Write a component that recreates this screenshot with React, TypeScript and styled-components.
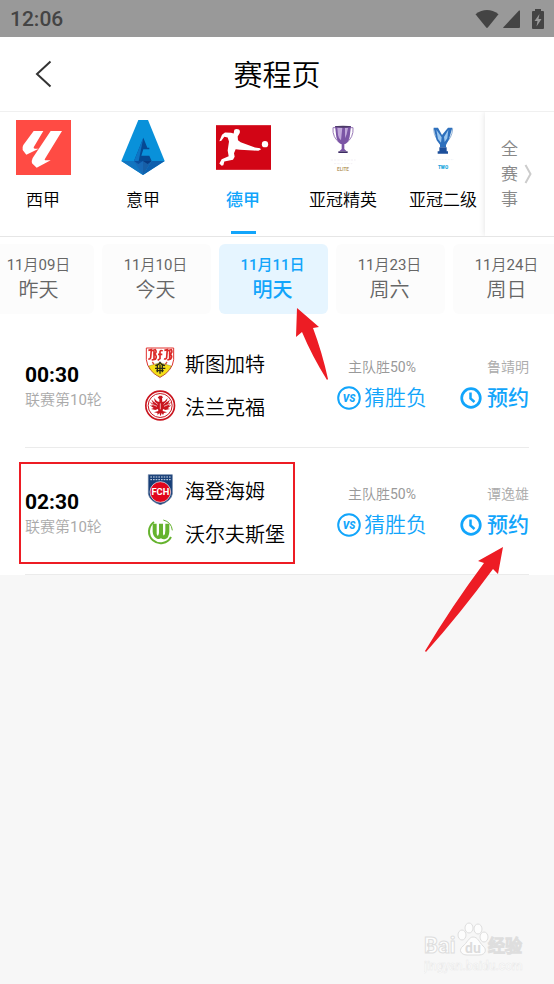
import React from "react";
import styled, { createGlobalStyle, css } from "styled-components";

const BLUE = "#12a5fb";
const RED = "#ed1c24";

const GlobalStyle = createGlobalStyle`
  * { box-sizing: border-box; }
  body {
    margin: 0;
    background: #f7f7f7;
    color: #000;
    font-family: Roboto, "Noto Sans CJK SC DemiLight", "Noto Sans CJK SC", sans-serif;
  }
  button {
    margin: 0;
    padding: 0;
    border: 0;
    background: none;
    color: inherit;
    font: inherit;
    cursor: pointer;
    white-space: nowrap;
  }
  svg { display: block; flex: none; }
`;

const mediumText = css`
  font-family: Roboto, "Noto Sans CJK SC", sans-serif;
  font-weight: 500;
`;

const Page = styled.div`
  position: relative;
  min-height: 100vh;
  overflow: hidden;
`;

const StatusBar = styled.div`
  display: flex;
  align-items: center;
  justify-content: space-between;
  height: 37px;
  padding: 0 6px 0 10px;
  background: #999;
  color: #444;
  font-size: 21px;
  font-weight: 500;
`;

const StatusIcons = styled.div`
  display: flex;
  align-items: center;
  gap: 4px;
`;

const Header = styled.header`
  display: grid;
  grid-template-columns: 60px 1fr 60px;
  align-items: center;
  height: 75px;
  border-bottom: 1px solid #f0f0f0;
  background: #fff;
`;

const BackButton = styled.button`
  display: flex;
  justify-content: flex-end;
  padding-right: 8px;
`;

const Title = styled.h1`
  margin: 0;
  padding-top: 3px;
  font-size: 29px;
  line-height: 40px;
  font-weight: 400;
  text-align: center;
`;

const LeagueBar = styled.nav`
  display: flex;
  height: 125px;
  border-bottom: 1px solid #e6e6e6;
  background: #fff;
`;

const LeagueList = styled.div`
  display: flex;
  flex: 1;
  min-width: 0;
  overflow: hidden;
`;

const LeagueTab = styled.button<{ $active?: boolean }>`
  display: flex;
  flex: none;
  flex-direction: column;
  align-items: center;
  width: 100px;
  padding-top: 8px;
  font-size: 17px;
  line-height: 24px;

  &:first-child { margin-left: -7px; }

  &::after {
    content: "";
    width: 25px;
    height: 3px;
    margin-top: 19px;
  }

  ${(p) =>
    p.$active &&
    css`
      ${mediumText}
      color: ${BLUE};
      &::after { background: ${BLUE}; }
    `}
`;

const LeagueLogo = styled.span`
  display: flex;
  align-items: center;
  height: 55px;
  margin-bottom: 13px;
`;

const AllLeagues = styled.button`
  display: flex;
  flex: none;
  align-items: center;
  gap: 6px;
  width: 69px;
  padding-left: 16px;
  background: #fff;
  box-shadow: 0 0 6px rgba(0, 0, 0, 0.12);
  clip-path: inset(0 0 0 -8px);
  color: #888;
  font-size: 17px;
  line-height: 25px;
`;

const VerticalLabel = styled.span`
  width: 17px;
  white-space: normal;
`;

const DateStrip = styled.div`
  display: flex;
  gap: 8px;
  padding: 7px 0;
  overflow: hidden;
  background: #fff;
`;

const DateCard = styled.button<{ $active?: boolean }>`
  display: flex;
  flex: none;
  flex-direction: column;
  align-items: center;
  justify-content: center;
  width: 109px;
  height: 70px;
  padding-right: 2px;
  border-radius: 6px;
  background: ${(p) => (p.$active ? "#e6f5ff" : "#fcfcfc")};
  color: ${(p) => (p.$active ? BLUE : "#666")};
  ${(p) => p.$active && mediumText}

  &:first-child { margin-left: -15px; }
`;

const DateText = styled.span`
  font-size: 15px;
  line-height: 22px;
`;

const DayText = styled.span`
  font-size: 20px;
  line-height: 28px;
`;

const MatchList = styled.main`
  background: #fff;
`;

const MatchRow = styled.section`
  position: relative;
  display: grid;
  grid-template-columns: 120px 1fr 90px 102px;
  align-items: center;
  height: 127px;
  margin: 0 25px;
  border-bottom: 1px solid #ebebeb;
`;

const Kickoff = styled.div`
  padding-top: 8px;
`;

const KickoffTime = styled.div`
  font-size: 21px;
  line-height: 25px;
  font-weight: 700;
`;

const Round = styled.div`
  color: #aaa;
  font-size: 15px;
  line-height: 25px;
`;

const Teams = styled.div`
  display: grid;
  gap: 12px;
`;

const Team = styled.div`
  display: flex;
  align-items: center;
  gap: 9px;
  height: 31px;
  font-size: 20px;
  line-height: 24px;
  white-space: nowrap;
`;

const TeamName = styled.span`
  padding-top: 4px;
`;

const Offer = styled.div<{ $end?: boolean }>`
  display: flex;
  flex-direction: column;
  align-items: ${(p) => (p.$end ? "flex-end" : "center")};
  gap: 9px;
  padding-bottom: 1px;
`;

const Caption = styled.span<{ $light?: boolean }>`
  color: ${(p) => (p.$light ? "#aaa" : "#999")};
  font-size: 14px;
  line-height: 20px;
`;

const ActionButton = styled.button<{ $strong?: boolean }>`
  display: flex;
  align-items: center;
  gap: ${(p) => (p.$strong ? 5 : 3)}px;
  height: 24px;
  color: ${BLUE};
  font-size: 21px;
  line-height: 24px;
  ${(p) => p.$strong && mediumText}
`;

const Highlight = styled.div`
  position: absolute;
  top: 14px;
  left: -6px;
  width: 276px;
  height: 102px;
  border: 2px solid ${RED};
  pointer-events: none;
`;

const DateArrow = styled.svg`
  position: absolute;
  top: 306px;
  left: 294px;
  pointer-events: none;
`;

const BookingArrow = styled.svg`
  position: absolute;
  top: 98px;
  right: 23px;
  pointer-events: none;
`;

const Watermark = styled.svg`
  position: absolute;
  right: 26px;
  bottom: 10px;
`;

const LaLigaLogo = () => (
  <svg width="55" height="55" viewBox="0 0 165 165">
    <rect width="165" height="165" fill="#ff4b44" />
    <path
      fill="#fff"
      d="M53 33H82L53 82Q52 86 57 86H68L31 104L20 90Q18 82 22 75ZM104 33H138L87 116Q84 121 90 121H104L62 143L48 130Q46 122 50 114Z"
    />
  </svg>
);

const SerieALogo = () => (
  <svg width="44" height="55" viewBox="0 0 130 165">
    <path fill="#0991da" d="M51 0H80L130 123L65 165L0 123Z" />
    <path fill="#064a94" d="M66 53L78 83H84V88H66L60 107H84L91 123H38Z" />
    <path fill="#0e74c4" d="M66 53L52 123H38Z" />
    <path fill="#1275c0" d="M0 123H38L65 165Z" />
    <path fill="#0a4f9f" d="M38 123H65V165Z" />
    <path fill="#083b82" d="M65 123H91L65 165Z" />
    <path fill="#0d5fae" d="M91 123H130L65 165Z" />
    <path fill="#2b8bd4" d="M38 123L51 132L65 123L79 132L91 123L65 165Z" opacity=".45" />
  </svg>
);

const BundesligaLogo = () => (
  <svg width="55" height="45" viewBox="0 0 165 134">
    <rect width="165" height="134" fill="#d20515" />
    <circle cx="147" cy="57" r="9.5" fill="#fff" />
    <path
      fill="#fff"
      d="M55 14Q61 9 69 13Q74 18 70 26L65 34L66 45L74 51L117 67L132 69L135 73L127 77L112 76L72 74L59 72L54 84L56 95L51 104L25 109L22 120L17 122L10 115L17 102L38 93L35 76L39 49L35 37L25 35L16 47L10 48L18 29L27 22L45 23L53 25Z"
    />
  </svg>
);

const EliteLogo = () => (
  <svg width="28" height="46" viewBox="0 0 84 138">
    <path fill="none" stroke="#9a7bb8" strokeWidth="3" d="M22 8H12Q9 38 35 56M62 8H72Q75 38 49 56" />
    <path fill="#7b55a5" d="M18 3H66L62 36Q58 54 46 58V72L53 79H31L38 72V58Q26 54 22 36Z" />
    <path fill="#c1a8da" d="M25 8H40L36 46Q29 42 27 30ZM48 9H57L53 28L48 40Z" />
    <ellipse cx="42" cy="5" rx="24" ry="3" fill="#4b3a66" />
    <path fill="#3c2a63" d="M28 79H56V84H28Z" />
    <path stroke="#f3f0f5" strokeWidth="3" strokeDasharray="7 3" d="M5 105H80M15 116H70" />
    <text x="42" y="137" textAnchor="middle" fontSize="14" fontWeight="700" fill="#b89b6c">ELITE</text>
  </svg>
);

const TwoLogo = () => (
  <svg width="22" height="42" viewBox="0 0 66 126">
    <path fill="none" stroke="#8eb0d4" strokeWidth="3" d="M18 5H5Q6 34 28 50M49 5H62Q60 34 39 50" />
    <path fill="#2e70bd" d="M5 2H18L30 24L48 2H61L51 37L42 54V61H24V53L14 40Z" />
    <path fill="#9bc7ef" d="M13 8L29 31L27 47L18 36ZM49 8L36 30L38 45L46 34Z" />
    <path fill="#1c4f9b" d="M22 61H44V73H48V80H17V73H22Z" />
    <path stroke="#f1f4f7" strokeWidth="3" strokeDasharray="6 3" d="M2 98H66" />
    <text x="33" y="125" textAnchor="middle" fontSize="14" fontWeight="900" fill="#15a4dc">TWO</text>
  </svg>
);

const StuttgartCrest = () => (
  <svg width="31" height="31" viewBox="0 0 93 93">
    <path fill="#fff" stroke="#e0322e" strokeWidth="3" d="M4 3H86V38Q82 72 45 91Q8 72 4 38Z" />
    <path fill="#f7df17" stroke="#54501a" strokeWidth="1" d="M11 57L45 47L79 57Q69 79 45 90Q20 79 11 57Z" />
    <path
      fill="none"
      stroke="#dc2a28"
      strokeWidth="5"
      d="M10 10L19 8L17 31Q16 38 10 35M17 12L31 8Q37 16 28 21Q38 27 31 37L20 39M27 12V36M38 40L45 35V14Q47 8 53 12M39 22H52M58 10L67 8L65 31Q64 38 57 35M65 12L79 8Q84 17 75 21Q84 28 77 36L67 39M74 12V36"
    />
    <path fill="none" stroke="#d54b39" strokeWidth="4" d="M22 45L27 52M66 45L61 52" />
    <path fill="none" stroke="#292a18" strokeWidth="4" d="M31 56L41 52L45 46L50 52L60 56M30 64H61M34 71H56M37 55V76M52 55V76M45 53V80" />
  </svg>
);

const FrankfurtCrest = () => (
  <svg width="31" height="31" viewBox="0 0 93 93">
    <circle cx="45.5" cy="46.5" r="43" fill="#fff" stroke="#c9141e" strokeWidth="5" />
    <circle cx="45.5" cy="46.5" r="36" fill="none" stroke="#c9141e" strokeWidth="3" />
    <path
      fill="#c9141e"
      d="M43 17L50 17L54 22L51 25L52 36L59 34L68 24L64 37L75 29L69 41L79 36L71 47L79 46L68 55L75 57L61 60L54 57L53 63L66 67L57 69L54 75L50 69L47 79L43 69L38 75L37 69L27 67L40 63L39 57L31 60L18 57L26 54L14 46L23 47L15 36L25 41L19 29L30 37L27 24L36 34L43 36L43 27L38 23Z"
    />
    <path stroke="#fff" strokeWidth="2" d="M24 32L38 43M17 41L36 49M69 31L56 43M76 41L57 49M46 40V58" />
  </svg>
);

const HeidenheimCrest = () => (
  <svg width="31" height="31" viewBox="0 0 93 93">
    <path fill="#173f78" stroke="#657ba0" strokeWidth="2" d="M10 2H82V60Q78 82 46 92Q14 82 10 60Z" />
    <path stroke="#d7e1ee" strokeWidth="3" strokeDasharray="5 3" d="M16 9H77M16 17H77" />
    <circle cx="46" cy="54" r="31" fill="#e1061c" stroke="#fff" strokeWidth="2" />
    <text x="46" y="64" textAnchor="middle" fontSize="28" fontWeight="700" fill="#fff">FCH</text>
  </svg>
);

const WolfsburgCrest = () => (
  <svg width="31" height="31" viewBox="0 0 93 93">
    <path fill="none" stroke="#65b32e" strokeWidth="6" d="M27 15A35 35 0 1 0 78 60" />
    <path fill="none" stroke="#65b32e" strokeWidth="3" d="M55 9A36 36 0 0 1 82 40" />
    <path
      fill="#65b32e"
      d="M23 20H35V50Q36 57 39 56Q42 54 42 46V20H54V50Q55 57 57 55Q61 52 61 40V20H73V44Q72 62 61 66Q54 68 48 64Q42 68 36 65Q24 59 23 44Z"
    />
  </svg>
);

const VsIcon = () => (
  <svg width="24" height="24" viewBox="0 0 24 24">
    <circle cx="12" cy="12" r="10.8" fill="none" stroke={BLUE} strokeWidth="2" />
    <text x="12" y="16" textAnchor="middle" fontSize="10" fontWeight="900" fontStyle="italic" fill={BLUE}>VS</text>
  </svg>
);

const ClockIcon = () => (
  <svg width="22" height="22" viewBox="0 0 22 22" fill="none" stroke={BLUE}>
    <circle cx="11" cy="11" r="9.3" strokeWidth="2.7" />
    <path d="M10.5 5.5V11.5L14.5 15" strokeWidth="2.5" />
  </svg>
);

type Club = { name: string; crest: React.ReactNode };
type Match = { time: string; home: Club; away: Club; host: string; marked?: boolean };

const leagues = [
  { name: "西甲", logo: <LaLigaLogo /> },
  { name: "意甲", logo: <SerieALogo /> },
  { name: "德甲", logo: <BundesligaLogo />, active: true },
  { name: "亚冠精英", logo: <EliteLogo /> },
  { name: "亚冠二级", logo: <TwoLogo /> },
];

const dates = [
  { date: "11月09日", day: "昨天" },
  { date: "11月10日", day: "今天" },
  { date: "11月11日", day: "明天", active: true },
  { date: "11月23日", day: "周六" },
  { date: "11月24日", day: "周日" },
];

const matches: Match[] = [
  {
    time: "00:30",
    home: { name: "斯图加特", crest: <StuttgartCrest /> },
    away: { name: "法兰克福", crest: <FrankfurtCrest /> },
    host: "鲁靖明",
  },
  {
    time: "02:30",
    home: { name: "海登海姆", crest: <HeidenheimCrest /> },
    away: { name: "沃尔夫斯堡", crest: <WolfsburgCrest /> },
    host: "谭逸雄",
    marked: true,
  },
];

export default function App() {
  return (
    <Page>
      <GlobalStyle />
      <StatusBar>
        <span>12:06</span>
        <StatusIcons>
          <svg width="24" height="20" viewBox="0 0 24 20">
            <path fill="#444" d="M0.5 5.2Q12-3 23.5 5.2L12.8 18.5Q12 19.3 11.2 18.5Z" />
          </svg>
          <svg width="17" height="18" viewBox="0 0 17 18">
            <path fill="#444" d="M17 1V17Q17 18 16 18H1Q-.3 18 .6 17L16 .6Q17 0 17 1Z" />
          </svg>
          <svg width="24" height="20" viewBox="-4 0 24 20">
            <path fill="#444" d="M7 0H13V2H15Q16 2 16 3V19Q16 20 15 20H5Q4 20 4 19V3Q4 2 5 2H7Z" />
            <path fill="#999" d="M11.5 5L6.5 12H9.5L8.5 17.5L13.5 10H10.5Z" />
          </svg>
        </StatusIcons>
      </StatusBar>

      <Header>
        <BackButton aria-label="返回">
          <svg width="17" height="28" viewBox="0 0 17 28">
            <path d="M15.5 1.5L2 14L15.5 26.5" fill="none" stroke="#333" strokeWidth="2" />
          </svg>
        </BackButton>
        <Title>赛程页</Title>
      </Header>

      <LeagueBar aria-label="联赛">
        <LeagueList>
          {leagues.map((l) => (
            <LeagueTab key={l.name} $active={l.active}>
              <LeagueLogo>{l.logo}</LeagueLogo>
              {l.name}
            </LeagueTab>
          ))}
        </LeagueList>
        <AllLeagues>
          <VerticalLabel>全赛事</VerticalLabel>
          <svg width="8" height="20" viewBox="0 0 8 20">
            <path d="M1.5 1L6.5 10L1.5 19" fill="none" stroke="#ccc" strokeWidth="2" />
          </svg>
        </AllLeagues>
      </LeagueBar>

      <DateStrip>
        {dates.map((d) => (
          <DateCard key={d.date} $active={d.active}>
            <DateText>{d.date}</DateText>
            <DayText>{d.day}</DayText>
          </DateCard>
        ))}
      </DateStrip>

      <MatchList>
        {matches.map((m) => (
          <MatchRow key={m.time}>
            <Kickoff>
              <KickoffTime>{m.time}</KickoffTime>
              <Round>联赛第10轮</Round>
            </Kickoff>
            <Teams>
              {[m.home, m.away].map((club) => (
                <Team key={club.name}>
                  {club.crest}
                  <TeamName>{club.name}</TeamName>
                </Team>
              ))}
            </Teams>
            <Offer>
              <Caption>主队胜50%</Caption>
              <ActionButton>
                <VsIcon />
                猜胜负
              </ActionButton>
            </Offer>
            <Offer $end>
              <Caption $light>{m.host}</Caption>
              <ActionButton $strong>
                <ClockIcon />
                预约
              </ActionButton>
            </Offer>
            {m.marked && <Highlight />}
            {m.marked && (
              <BookingArrow width="82" height="108" viewBox="0 0 82 108">
                <path fill={RED} d="M79 1L54 15L60 17Q28 60 1 105L2 106Q36 68 69 23L74 28Z" />
              </BookingArrow>
            )}
          </MatchRow>
        ))}
      </MatchList>

      <DateArrow width="36" height="76" viewBox="0 0 36 76">
        <path fill={RED} d="M3 2L2 31L8 26Q18 50 33 74L34 73Q28 46 19 22L25 21Z" />
      </DateArrow>

      <Watermark width="104" height="56" viewBox="0 0 104 56" role="img" aria-label="Baidu 经验">
        <g fill="#fdfdfd" stroke="#dedede" strokeWidth="1">
          <text x="0" y="35" fontSize="22" fontWeight="700">Bai</text>
          <ellipse cx="38" cy="17" rx="4" ry="5" />
          <ellipse cx="45" cy="10" rx="4" ry="5" />
          <ellipse cx="54" cy="11" rx="4" ry="5" />
          <ellipse cx="60" cy="19" rx="4" ry="5" />
          <path d="M49 19C45 19 43 25 39 28C34 32 37 37 43 37H55C62 37 63 31 59 28C55 24 54 19 49 19Z" />
          <text x="64" y="34" fontSize="17" fontWeight="700">经验</text>
        </g>
        <text x="41" y="35" fontSize="14" fontWeight="700" fill="#dcdcdc">du</text>
        <text x="0" y="52" fontSize="12" fontWeight="500" fill="#fff" stroke="#e9e9e9" strokeWidth=".5">jingyan.baidu.com</text>
      </Watermark>
    </Page>
  );
}
